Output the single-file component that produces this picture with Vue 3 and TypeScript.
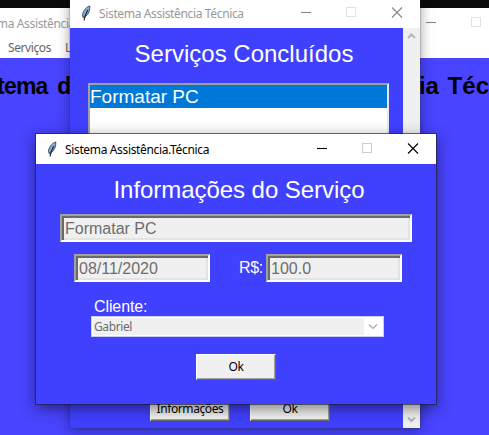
<script setup lang="ts">
import { ref } from 'vue'

const servico = ref('Formatar PC')
const data = ref('08/11/2020')
const valor = ref('100.0')
const cliente = ref('Gabriel')
</script>

<template>
  <div class="desktop">
    <section class="win back">
      <header class="bar">
        <span class="caption">Sistema Assistência Técnica</span>
        <svg class="controls" width="150" height="30" viewBox="0 0 150 30">
          <path class="line" d="M19 14.5h10" />
          <rect class="box" x="64.5" y="9.5" width="9" height="9" />
        </svg>
      </header>
      <nav class="menu"><span>Serviços</span><span>Listar</span></nav>
      <div class="banner"><span class="lead">Sistema de</span><span>Assistência Técnica</span></div>
    </section>

    <section class="win middle">
      <header class="bar">
        <svg class="feather" width="12" height="17" viewBox="0 0 12 17">
          <path d="M9.8 1C7 1.5 3.5 5 2.5 9.5L3 12.5l2.5-1C8.8 9 10 5 9.8 1Z" fill="#88b0d4" stroke="#2c4258" stroke-width=".9" />
          <path d="M7.8 5C6 8 4.5 11 4 15.5" stroke="#101820" fill="none" stroke-width="1.1" />
        </svg>
        <span class="caption">Sistema Assistência Técnica</span>
        <svg class="controls" width="138" height="30" viewBox="0 0 138 30">
          <path class="line" d="M19 14.5h10" />
          <rect class="box" x="64.5" y="9.5" width="9" height="9" />
          <path class="line" d="M110 9.5l10 10m0-10l-10 10" />
        </svg>
      </header>
      <div class="content">
        <div class="list-pane">
          <h1>Serviços Concluídos</h1>
          <ul class="listbox"><li>{{ servico }}</li></ul>
          <div class="actions">
            <button type="button">Informações</button>
            <button type="button">Ok</button>
          </div>
        </div>
        <div class="scrollbar">
          <svg width="9" height="7" viewBox="0 0 9 7"><path d="M1 5l3.5-3.5L8 5" /></svg>
          <svg width="9" height="7" viewBox="0 0 9 7"><path d="M1 1.5L4.5 5 8 1.5" /></svg>
        </div>
      </div>
    </section>

    <section class="win front">
      <header class="bar">
        <svg class="feather" width="12" height="17" viewBox="0 0 12 17">
          <path d="M9.8 1C7 1.5 3.5 5 2.5 9.5L3 12.5l2.5-1C8.8 9 10 5 9.8 1Z" fill="#88b0d4" stroke="#2c4258" stroke-width=".9" />
          <path d="M7.8 5C6 8 4.5 11 4 15.5" stroke="#101820" fill="none" stroke-width="1.1" />
        </svg>
        <span class="caption">Sistema Assistência.Técnica</span>
        <svg class="controls" width="138" height="30" viewBox="0 0 138 30">
          <path class="line" d="M19 14.5h10" />
          <rect class="box" x="64.5" y="9.5" width="9" height="9" />
          <path class="line" d="M110 9.5l10 10m0-10l-10 10" />
        </svg>
      </header>
      <form class="form" @submit.prevent>
        <h1>Informações do Serviço</h1>
        <div class="field wide">{{ servico }}</div>
        <div class="row">
          <div class="field">{{ data }}</div>
          <label>R$:</label>
          <div class="field">{{ valor }}</div>
        </div>
        <label class="client">Cliente:</label>
        <div class="combo">
          <span>{{ cliente }}</span>
          <i><svg width="10" height="7" viewBox="0 0 10 7"><path d="M1 1.5l4 4 4-4" /></svg></i>
        </div>
        <button type="button">Ok</button>
      </form>
    </section>
  </div>
</template>

<style>
body { margin: 0; overflow: hidden; }
</style>

<style scoped>
.desktop {
  position: relative;
  width: 489px;
  height: 435px;
  overflow: hidden;
  background: #0b0b0b;
  font-family: "Liberation Sans", Arial, sans-serif;
}
.win { position: absolute; box-sizing: border-box; }
.bar {
  display: flex;
  align-items: center;
  height: 30px;
  background: #fff;
  font: 12px "Noto Sans", sans-serif;
  letter-spacing: -0.35px;
  white-space: nowrap;
}
.controls { margin-left: auto; flex: none; }
.line { fill: none; stroke: #000; stroke-width: 1.1; }
.box { fill: none; stroke: #ccc; }
.feather { margin: 0 7px 0 10px; flex: none; }
.caption { color: #999; }
.middle .line, .back .line { stroke: #888; }
.middle .box, .back .box { stroke: #e2e2e2; }

.back { left: -46px; top: 8px; width: 582px; height: 427px; background: #4844ff; }
.back .caption { padding-left: 18px; }
.back .controls { margin-right: -21px; }
.menu {
  display: flex;
  gap: 14px;
  height: 20px;
  padding-left: 54px;
  background: #fff;
  color: #666;
  font: 12px/19px "Noto Sans", sans-serif;
  letter-spacing: -0.4px;
}
.banner {
  display: flex;
  justify-content: space-between;
  padding: 14px 0 0 11px;
  width: 572px;
  font-size: 24px;
  line-height: 28px;
  font-weight: bold;
  white-space: nowrap;
  word-spacing: 2px;
}
.lead { font-size: 23px; letter-spacing: -0.8px; word-spacing: 4px; }

.middle {
  left: 70px;
  top: -2px;
  width: 350px;
  height: 430px;
  background: #4040ff;
  box-shadow: 0 0 1px #333, 0 2px 12px rgba(0, 0, 0, .4);
}
.content { display: flex; height: 400px; }
.list-pane { display: flex; flex-direction: column; width: 333px; }
h1 {
  margin: 0;
  color: #fff;
  font-size: 24px;
  font-weight: normal;
  line-height: 28px;
  text-align: center;
  white-space: nowrap;
}
.list-pane h1 { padding: 12px 0 15px 15px; }
.listbox {
  box-sizing: border-box;
  width: 301px;
  height: 290px;
  margin: 0 0 0 18px;
  padding: 0;
  border: 2px solid;
  border-color: #a0a0a0 #e8e8f4 #e8e8f4 #a0a0a0;
  background: #fff;
  list-style: none;
}
.listbox li { height: 23px; background: #0078d7; color: #fff; font-size: 19px; line-height: 24px; }
.actions { display: flex; gap: 20px; padding: 22px 0 0 80px; }
button {
  box-sizing: border-box;
  width: 80px;
  height: 26px;
  padding: 0;
  border: 1px solid;
  border-color: #fff #696969 #696969 #fff;
  box-shadow: inset -1px -1px #a0a0a0;
  background: #f0f0f0;
  color: #000;
  font: 12px/22px "Noto Sans", sans-serif;
  letter-spacing: -0.4px;
}
.actions button { padding-top: 2px; }
.scrollbar {
  box-sizing: border-box;
  display: flex;
  flex-direction: column;
  justify-content: space-between;
  align-items: center;
  width: 17px;
  padding: 5px 0;
  background: #f0f0f0;
}
.scrollbar path { fill: none; stroke: #b5b5b5; stroke-width: 2; }

.front {
  left: 36px;
  top: 134px;
  width: 400px;
  height: 270px;
  background: #4040ff;
  box-shadow: 0 0 0 1px rgba(30, 30, 60, .65), 0 4px 14px rgba(0, 0, 0, .5);
}
.front .caption { color: #000; }
.form { display: flex; flex-direction: column; align-items: flex-start; }
.form h1 { width: 400px; padding: 12px 0 10px 6px; box-sizing: border-box; letter-spacing: -0.05px; }
.field {
  box-sizing: border-box;
  width: 136px;
  height: 28px;
  padding-left: 1px;
  border: 2px solid;
  border-color: #a0a0a0 #fff #fff #a0a0a0;
  background: #f0f0f0;
  box-shadow: inset 2px 2px #696969, inset -2px -2px #e3e3e3;
  color: #6d6d6d;
  font-size: 16px;
  line-height: 25px;
  text-indent: 2px;
}
.wide { width: 352px; margin-left: 24px; }
.row { display: flex; align-items: center; padding: 12px 0 0 38px; }
label { color: #fff; font-size: 16px; line-height: 20px; }
.row label { width: 27px; margin-left: 29px; letter-spacing: -0.3px; }
.client { margin: 15px 0 0 58px; letter-spacing: -0.1px; }
.combo {
  box-sizing: border-box;
  display: flex;
  justify-content: space-between;
  width: 293px;
  height: 21px;
  margin: -1px 0 0 55px;
  border: 1px solid #ccccf0;
  padding: 1px;
  background: #fff;
  color: #6d6d6d;
  font: 12px/17px "Noto Sans", sans-serif;
  letter-spacing: -0.4px;
}
.combo span { flex: 1; padding-left: 1px; background: #f0f0f0; }
.combo i { display: flex; align-items: center; justify-content: center; width: 18px; }
.combo path { fill: none; stroke: #aaa; stroke-width: 1.2; }
.form button { margin: 17px 0 0 160px; }
</style>
